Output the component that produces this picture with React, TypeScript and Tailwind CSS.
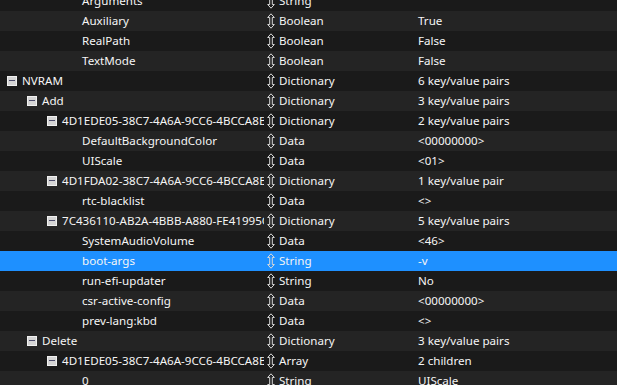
import React from 'react';

type Row = { level: number; key: string; type: string; value: string; open?: boolean };

const rows: Row[] = [
  { level: 3, key: 'Arguments', type: 'String', value: '' },
  { level: 3, key: 'Auxiliary', type: 'Boolean', value: 'True' },
  { level: 3, key: 'RealPath', type: 'Boolean', value: 'False' },
  { level: 3, key: 'TextMode', type: 'Boolean', value: 'False' },
  { level: 0, key: 'NVRAM', type: 'Dictionary', value: '6 key/value pairs', open: true },
  { level: 1, key: 'Add', type: 'Dictionary', value: '3 key/value pairs', open: true },
  { level: 2, key: '4D1EDE05-38C7-4A6A-9CC6-4BCCA8B30C14', type: 'Dictionary', value: '2 key/value pairs', open: true },
  { level: 3, key: 'DefaultBackgroundColor', type: 'Data', value: '<00000000>' },
  { level: 3, key: 'UIScale', type: 'Data', value: '<01>' },
  { level: 2, key: '4D1FDA02-38C7-4A6A-9CC6-4BCCA8B30102', type: 'Dictionary', value: '1 key/value pair', open: true },
  { level: 3, key: 'rtc-blacklist', type: 'Data', value: '<>' },
  { level: 2, key: '7C436110-AB2A-4BBB-A880-FE41995C9F82', type: 'Dictionary', value: '5 key/value pairs', open: true },
  { level: 3, key: 'SystemAudioVolume', type: 'Data', value: '<46>' },
  { level: 3, key: 'boot-args', type: 'String', value: '-v' },
  { level: 3, key: 'run-efi-updater', type: 'String', value: 'No' },
  { level: 3, key: 'csr-active-config', type: 'Data', value: '<00000000>' },
  { level: 3, key: 'prev-lang:kbd', type: 'Data', value: '<>' },
  { level: 1, key: 'Delete', type: 'Dictionary', value: '3 key/value pairs', open: true },
  { level: 2, key: '4D1EDE05-38C7-4A6A-9CC6-4BCCA8B30C14', type: 'Array', value: '2 children', open: true },
  { level: 3, key: '0', type: 'String', value: 'UIScale' },
];

const indent = ['pl-[7px]', 'pl-[27px]', 'pl-[47px]', 'pl-[67px]'];
const leafIndent = ['pl-[22px]', 'pl-[42px]', 'pl-[62px]', 'pl-[82px]'];

function MinusBox() {
  return (
    <span className="w-[10px] h-[10px] mr-[5px] shrink-0 bg-[#d4d4d4] border border-[#f0f0f0] flex items-center justify-center">
      <span className="w-[6px] h-px bg-[#4a4a6a]" />
    </span>
  );
}

function UpDown() {
  return (
    <svg width="8" height="16" viewBox="0 0 8 16" className="shrink-0">
      <polygon
        points="4,0.8 7.3,4.5 5.3,4.5 5.3,11.5 7.3,11.5 4,15.2 0.7,11.5 2.7,11.5 2.7,4.5 0.7,4.5"
        fill="none"
        stroke="#d8d8d8"
        strokeWidth="1"
      />
    </svg>
  );
}

export default function App() {
  return (
    <div className="w-[617px] h-[385px] overflow-hidden bg-[#1a1a1a] text-[11.6px] text-[#f5f5f5] font-['Noto_Sans',sans-serif]">
      <div className="-mt-[9px]">
        {rows.map((r, i) => {
          const selected = r.key === 'boot-args';
          const bg = selected ? 'bg-[#1e90ff]' : i % 2 === 1 ? 'bg-[#242424]' : 'bg-[#1a1a1a]';
          return (
            <div key={i} className={`grid grid-cols-[264px_150px_1fr] h-5 items-center ${bg}`}>
              <div className={`flex items-center min-w-0 overflow-hidden whitespace-nowrap ${r.open ? indent[r.level] : leafIndent[r.level]}`}>
                {r.open && <MinusBox />}
                <span>{r.key}</span>
              </div>
              <div className="flex items-center gap-[4px] pl-[3px] whitespace-nowrap">
                <UpDown />
                <span>{r.type}</span>
              </div>
              <div className="pl-[4px] whitespace-nowrap">{r.value}</div>
            </div>
          );
        })}
      </div>
    </div>
  );
}
